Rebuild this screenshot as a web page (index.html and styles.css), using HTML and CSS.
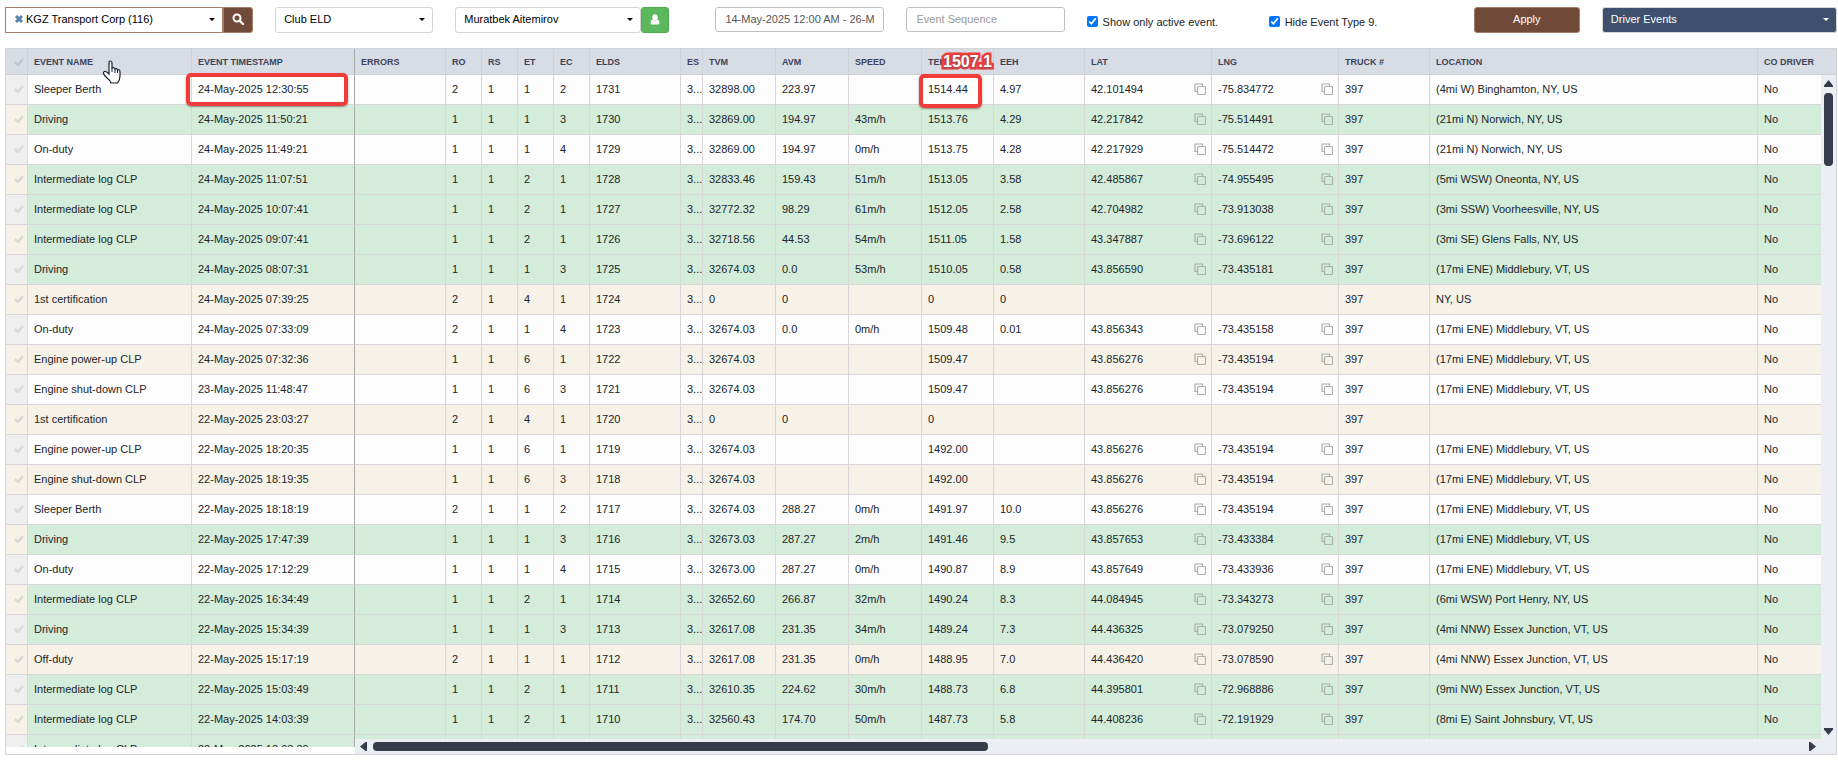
FILE: index.html
```html
<!DOCTYPE html>
<html lang="en">
<head>
  <meta charset="UTF-8" />
  <meta name="viewport" content="width=device-width, initial-scale=1.0"/>
  <title>Driver Events</title>
  <link rel="stylesheet" href="styles.css">
</head>
<body>

<form class="filters" onsubmit="return false">
  <div class="group company">
    <svg class="clear" viewBox="0 0 10 10"><path d="M2 2l6 6M8 2l-6 6"/></svg>
    <select aria-label="Company"><option>KGZ Transport Corp (116)</option></select>
    <button class="btn-search" aria-label="Search">
      <svg width="12" height="12" viewBox="0 0 12 12"><circle cx="5" cy="5" r="3.5" fill="none" stroke="#fff" stroke-width="2"/><path d="M8 8l3 3" stroke="#fff" stroke-width="2.4" stroke-linecap="round"/></svg>
    </button>
  </div>
  <div class="group">
    <select aria-label="Device"><option>Club ELD</option></select>
  </div>
  <div class="group driver">
    <select aria-label="Driver"><option>Muratbek Aitemirov</option></select>
    <button class="btn-user" aria-label="Driver profile">
      <svg width="10" height="11" viewBox="0 0 10 11" fill="#fff"><ellipse cx="5" cy="3.2" rx="2.6" ry="3"/><path d="M2.2 5.2Q5 8 7.8 5.2Q9.6 6 9.4 9.2Q9.3 10.5 8 10.5H2Q.7 10.5 .6 9.2Q.4 6 2.2 5.2z"/></svg>
    </button>
  </div>
  <input class="text" type="text" aria-label="Date range" value="14-May-2025 12:00 AM - 26-May-2025 11:59 PM">
  <input class="text" type="text" aria-label="Event sequence" placeholder="Event Sequence">
  <label class="check"><input type="checkbox" checked> Show only active event.</label>
  <label class="check"><input type="checkbox" checked> Hide Event Type 9.</label>
  <button class="btn-apply">Apply</button>
  <div class="group report">
    <select aria-label="Report"><option>Driver Events</option></select>
  </div>
</form>

<div class="grid">
  <div class="grid-main">
    <div class="grid-view">
      <table>
        <colgroup>
          <col class="w-check"><col class="w-name"><col class="w-time"><col class="w-m">
          <col class="w-xs"><col class="w-xs"><col class="w-xs"><col class="w-xs">
          <col class="w-m"><col class="w-check"><col class="w-s"><col class="w-s"><col class="w-s"><col class="w-teh">
          <col class="w-m"><col class="w-geo"><col class="w-geo"><col class="w-m"><col><col class="w-last">
        </colgroup>
        <thead>
          <tr>
            <th class="tick"><svg width="10" height="8" viewBox="0 0 10 8"><path d="M1 4l3 3 5-6"/></svg></th>
            <th>EVENT NAME</th><th class="frozen">EVENT TIMESTAMP</th><th>ERRORS</th>
            <th>RO</th><th>RS</th><th>ET</th><th>EC</th><th>ELDS</th><th>ES</th>
            <th>TVM</th><th>AVM</th><th>SPEED</th><th>TEH</th><th>EEH</th>
            <th>LAT</th><th>LNG</th><th>TRUCK #</th><th>LOCATION</th><th>CO DRIVER</th>
          </tr>
        </thead>
        <tbody id="rows"></tbody>
      </table>
    </div>
    <div class="vbar">
      <div class="vbar-head"></div>
      <svg width="9" height="7" viewBox="0 0 9 7"><path d="M4.5 0L9 5.5V7H0V5.5z"/></svg>
      <div class="vthumb"></div>
      <svg class="down" width="9" height="7" viewBox="0 0 9 7"><path d="M4.5 7L9 1.5V0H0V1.5z"/></svg>
    </div>
  </div>
  <div class="hbar">
    <svg width="7" height="9" viewBox="0 0 7 9"><path d="M0 4.5L5.5 0H7V9H5.5z"/></svg>
    <div class="htrack"><div class="hthumb"></div></div>
    <svg width="7" height="9" viewBox="0 0 7 9"><path d="M7 4.5L1.5 0H0V9H1.5z"/></svg>
  </div>
</div>

<!-- markup drawn over the grid -->
<div class="mark mark-time"></div>
<div class="mark mark-teh"></div>
<div class="note">1507.1</div>
<svg class="cursor" width="20" height="24" viewBox="0 0 20 24">
  <path d="M7 14V3Q7 1 8.5 1T10 3V8Q12 7 13 9Q15 8 15.5 10Q18 9 18 12V16Q18 20 15.5 23H9Q8 20 5 18Q2 15 1.5 13.5Q1 12 2.5 11.5Q4 11 7 14z" fill="#fff" stroke="#1c2030" stroke-width="1.2"/>
  <path d="M10 8v4M13 9v4M15.5 10v3" fill="none" stroke="#1c2030"/>
</svg>

<script>
  // name|time|RO|RS|ET|EC|ELDS|TVM|AVM|speed|TEH|EEH|lat|lng|location
  const events = [
    "Sleeper Berth|24-May-2025 12:30:55|2|1|1|2|1731|32898.00|223.97||1514.44|4.97|42.101494|-75.834772|(4mi W) Binghamton, NY, US",
    "Driving|24-May-2025 11:50:21|1|1|1|3|1730|32869.00|194.97|43m/h|1513.76|4.29|42.217842|-75.514491|(21mi N) Norwich, NY, US",
    "On-duty|24-May-2025 11:49:21|1|1|1|4|1729|32869.00|194.97|0m/h|1513.75|4.28|42.217929|-75.514472|(21mi N) Norwich, NY, US",
    "Intermediate log CLP|24-May-2025 11:07:51|1|1|2|1|1728|32833.46|159.43|51m/h|1513.05|3.58|42.485867|-74.955495|(5mi WSW) Oneonta, NY, US",
    "Intermediate log CLP|24-May-2025 10:07:41|1|1|2|1|1727|32772.32|98.29|61m/h|1512.05|2.58|42.704982|-73.913038|(3mi SSW) Voorheesville, NY, US",
    "Intermediate log CLP|24-May-2025 09:07:41|1|1|2|1|1726|32718.56|44.53|54m/h|1511.05|1.58|43.347887|-73.696122|(3mi SE) Glens Falls, NY, US",
    "Driving|24-May-2025 08:07:31|1|1|1|3|1725|32674.03|0.0|53m/h|1510.05|0.58|43.856590|-73.435181|(17mi ENE) Middlebury, VT, US",
    "1st certification|24-May-2025 07:39:25|2|1|4|1|1724|0|0||0|0|||NY, US",
    "On-duty|24-May-2025 07:33:09|2|1|1|4|1723|32674.03|0.0|0m/h|1509.48|0.01|43.856343|-73.435158|(17mi ENE) Middlebury, VT, US",
    "Engine power-up CLP|24-May-2025 07:32:36|1|1|6|1|1722|32674.03|||1509.47||43.856276|-73.435194|(17mi ENE) Middlebury, VT, US",
    "Engine shut-down CLP|23-May-2025 11:48:47|1|1|6|3|1721|32674.03|||1509.47||43.856276|-73.435194|(17mi ENE) Middlebury, VT, US",
    "1st certification|22-May-2025 23:03:27|2|1|4|1|1720|0|0||0||||",
    "Engine power-up CLP|22-May-2025 18:20:35|1|1|6|1|1719|32674.03|||1492.00||43.856276|-73.435194|(17mi ENE) Middlebury, VT, US",
    "Engine shut-down CLP|22-May-2025 18:19:35|1|1|6|3|1718|32674.03|||1492.00||43.856276|-73.435194|(17mi ENE) Middlebury, VT, US",
    "Sleeper Berth|22-May-2025 18:18:19|2|1|1|2|1717|32674.03|288.27|0m/h|1491.97|10.0|43.856276|-73.435194|(17mi ENE) Middlebury, VT, US",
    "Driving|22-May-2025 17:47:39|1|1|1|3|1716|32673.03|287.27|2m/h|1491.46|9.5|43.857653|-73.433384|(17mi ENE) Middlebury, VT, US",
    "On-duty|22-May-2025 17:12:29|1|1|1|4|1715|32673.00|287.27|0m/h|1490.87|8.9|43.857649|-73.433936|(17mi ENE) Middlebury, VT, US",
    "Intermediate log CLP|22-May-2025 16:34:49|1|1|2|1|1714|32652.60|266.87|32m/h|1490.24|8.3|44.084945|-73.343273|(6mi WSW) Port Henry, NY, US",
    "Driving|22-May-2025 15:34:39|1|1|1|3|1713|32617.08|231.35|34m/h|1489.24|7.3|44.436325|-73.079250|(4mi NNW) Essex Junction, VT, US",
    "Off-duty|22-May-2025 15:17:19|2|1|1|1|1712|32617.08|231.35|0m/h|1488.95|7.0|44.436420|-73.078590|(4mi NNW) Essex Junction, VT, US",
    "Intermediate log CLP|22-May-2025 15:03:49|1|1|2|1|1711|32610.35|224.62|30m/h|1488.73|6.8|44.395801|-72.968886|(9mi NW) Essex Junction, VT, US",
    "Intermediate log CLP|22-May-2025 14:03:39|1|1|2|1|1710|32560.43|174.70|50m/h|1487.73|5.8|44.408236|-72.191929|(8mi E) Saint Johnsbury, VT, US",
    "Intermediate log CLP|22-May-2025 13:03:39||||||||||||||"
  ];

  const tick = '<svg width="10" height="8" viewBox="0 0 10 8"><path d="M1 4l3 3 5-6"/></svg>';
  const copy = '<svg class="copy" width="12" height="12" viewBox="0 0 12 12"><path d="M3 8.5H1V1h7.5v2"/><rect x="3.5" y="3.5" width="8" height="8" rx="1"/></svg>';

  const cell = v => `<td>${v}</td>`;
  const geo = v => cell(v && `<div class="geo">${v}${copy}</div>`);

  document.getElementById("rows").innerHTML = events.map(line => {
    const [name, time, ro, rs, et, ec, elds, tvm, avm, speed, teh, eeh, lat, lng, loc] = line.split("|");
    const driving = name === "Driving" || name.startsWith("Intermediate");
    return `<tr class="${driving ? "driving" : ""}">
      <td class="tick">${tick}</td><td>${name}</td><td class="frozen">${time}</td><td></td>
      ${[ro, rs, et, ec, elds, elds && "3...", tvm, avm, speed, teh, eeh].map(cell).join("")}
      ${geo(lat)}${geo(lng)}${cell(elds && "397")}${cell(loc)}${cell(elds && "No")}
    </tr>`;
  }).join("");
</script>

</body>
</html>
```
FILE: styles.css
```css
* {
  box-sizing: border-box;
}

body {
  display: flex;
  flex-direction: column;
  gap: 16px;
  height: 100vh;
  margin: 0;
  padding: 7px 1px 9px 5px;
  overflow: hidden;
  background: #fff;
  color: #212529;
  font-family: "Liberation Sans", Arial, sans-serif;
  font-size: 11px;
}

/* filters */
.filters {
  display: grid;
  grid-template-columns: 248fr 158fr 238fr 169fr 158fr 160fr 183fr 106fr 235fr;
  column-gap: 22px;
  height: 25px;
  flex: none;
}

.group {
  display: flex;
  position: relative;
  min-width: 0;
}

.driver {
  padding-right: 24px;
}

select, input, button {
  font: inherit;
  min-width: 0;
}

select {
  flex: 1;
  height: 26px;
  padding: 0 8px 2px;
  border: 1px solid #d5d5d5;
  border-radius: 3px;
  appearance: none;
  background: #fff;
  color: #000;
}

.group::after {
  content: "";
  position: absolute;
  top: 11px;
  right: 8px;
  border: 3px solid transparent;
  border-top-color: #000;
  border-bottom: 0;
  pointer-events: none;
}

.company::after {
  right: 38px;
}

.driver::after {
  right: 60px;
}

.company select {
  padding-left: 20px;
  border-color: #a87c6b;
  border-radius: 0;
}

.clear {
  position: absolute;
  top: 7px;
  left: 9px;
  width: 10px;
  height: 10px;
  stroke: #5b86ab;
  stroke-width: 3;
}

button {
  display: flex;
  align-items: center;
  justify-content: center;
  padding: 0 0 2px;
  border: 1px solid #a87c6b;
  border-radius: 3px;
  background: #714a3a;
  color: #fff;
}

.btn-search {
  width: 30px;
  height: 26px;
  border-radius: 0 3px 3px 0;
}

.btn-user {
  width: 28px;
  height: 26px;
  border-color: #4cae4c;
  background: #5cb85c;
}

.btn-apply {
  height: 26px;
}

.text {
  height: 25px;
  padding: 0 9px 2px;
  border: 1px solid #bfbfbf;
  border-radius: 3px;
  color: #555;
}

.text::placeholder {
  color: #999;
}

.check {
  display: flex;
  align-items: center;
  gap: 5px;
  padding-top: 3px;
}

.check input {
  width: 11px;
  height: 11px;
  margin: 0;
  accent-color: #0075ff;
}

.report select {
  background: #3d506e;
  color: #fff;
}

.report::after {
  border-top-color: #fff;
}

/* grid */
.grid {
  display: flex;
  flex-direction: column;
  flex: 1;
  min-height: 0;
  border: 1px solid #d3d4d6;
}

.grid-main {
  display: flex;
  flex: 1;
  min-height: 0;
}

.grid-view {
  flex: 1;
  min-width: 0;
  overflow: hidden;
}

table {
  width: 100%;
  table-layout: fixed;
  border-collapse: separate;
  border-spacing: 0;
}

.w-check { width: 22px; }
.w-xs { width: 36px; }
.w-s { width: 73px; }
.w-teh { width: 72px; }
.w-m { width: 91px; }
.w-geo { width: 127px; }
.w-name { width: 164px; }
.w-time { width: 163px; }
.w-last { width: 63px; }

th, td {
  padding: 0 0 0 6px;
  border-right: 1px solid #d9d7da;
  border-bottom: 1px solid #d9d7da;
  text-align: left;
  white-space: nowrap;
}

th {
  height: 26px;
  background: #d8dce4;
  border-color: #cfd1d4;
  color: #3e4359;
  font-size: 9px;
}

td {
  height: 30px;
  padding-bottom: 2px;
  background: #fdfdfd;
}

th:last-child, td:last-child {
  border-right: 0;
}

tr:nth-child(even) td {
  background: #f6f2e7;
}

tr.driving td:not(.tick) {
  background: #d4ecda;
}

tr:nth-child(odd) td.tick {
  background: #efefef;
}

.tick svg {
  display: block;
  margin-left: 2px;
  fill: none;
  stroke: #dad9d5;
  stroke-width: 2.6;
}

th.tick svg {
  stroke: #c3c7cf;
}

th.frozen, td.frozen {
  border-right-color: #a9a9ab;
}

.geo {
  display: flex;
  align-items: center;
  justify-content: space-between;
  padding-right: 5px;
}

.copy {
  fill: none;
  stroke: #acb0ae;
  stroke-width: 1.2;
}

/* scrollbars */
.vbar {
  display: flex;
  flex-direction: column;
  align-items: center;
  width: 15px;
  padding-bottom: 12px;
  background: #ebeff3;
  fill: #363c4a;
}

.vbar-head {
  width: 100%;
  height: 26px;
  margin-bottom: 5px;
  border-bottom: 1px solid #cfd1d4;
  background: #d8dce4;
}

.vthumb {
  width: 9px;
  height: 73px;
  margin-top: 6px;
  border-radius: 4px;
  background: #363c4a;
}

.down {
  margin-top: auto;
}

.hbar {
  display: flex;
  align-items: center;
  gap: 6px;
  position: relative;
  height: 15px;
  margin: -8px 0 0 349px;
  padding: 0 20px 0 5px;
  background: #ebeff3;
  fill: #363c4a;
}

.htrack {
  flex: 1;
}

.hthumb {
  width: 43%;
  height: 9px;
  border-radius: 4px;
  background: #363c4a;
}

/* markup */
.mark {
  position: absolute;
  border: 4px solid #f03b3b;
  border-radius: 5px;
  box-shadow: 0 1px 2px #888;
}

.mark-time {
  top: 73px;
  left: 186px;
  width: 162px;
  height: 33px;
}

.mark-teh {
  top: 74px;
  left: 919px;
  width: 63px;
  height: 34px;
}

.note {
  position: absolute;
  top: 53px;
  left: 943px;
  color: #fff;
  font-size: 16px;
  font-weight: bold;
  line-height: 18px;
  -webkit-text-stroke: 5px #f03b3b;
  paint-order: stroke fill;
  text-shadow: 0 1px 2px #666;
}

.cursor {
  position: absolute;
  top: 60px;
  left: 102px;
}
```
